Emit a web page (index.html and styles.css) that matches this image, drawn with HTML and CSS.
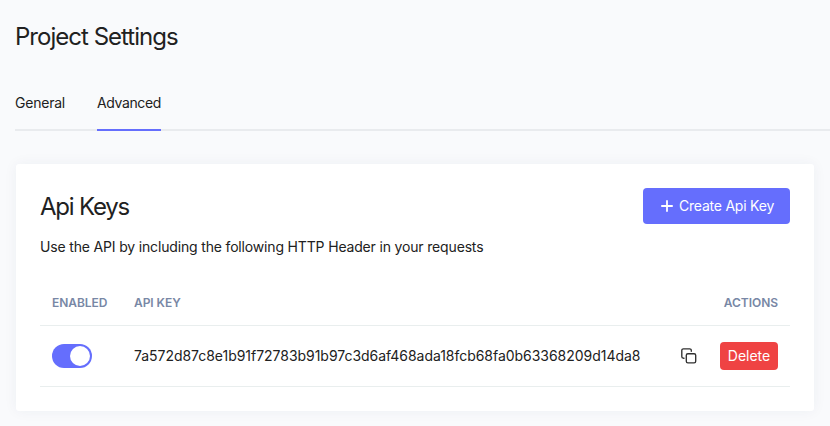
FILE: index.html
```html
<!DOCTYPE html>
<html lang="en">
<head>
<meta charset="utf-8">
<title>Project Settings</title>
<link rel="stylesheet" href="styles.css">
</head>
<body>
<main class="page">
  <h1 class="page-title">Project Settings</h1>
  <nav class="tabs">
    <a class="tab tab-general">General</a>
    <a class="tab tab-advanced active">Advanced</a>
  </nav>
  <section class="card">
    <header class="card-header">
      <h2 class="card-title">Api Keys</h2>
      <button class="create" type="button">
        <svg class="plus" viewBox="0 0 12 12"><path d="M6 .9v10.2M.9 6h10.2"/></svg>
        <span>Create Api Key</span>
      </button>
    </header>
    <p class="description">Use the API by including the following HTTP Header in your requests</p>
    <div class="table">
      <div class="row head">
        <span>Enabled</span>
        <span>Api Key</span>
        <span class="end">Actions</span>
      </div>
      <div class="row entry">
        <span class="toggle"><span class="knob"></span></span>
        <span class="key">7a572d87c8e1b91f72783b91b97c3d6af468ada18fcb68fa0b63368209d14da8</span>
        <span class="actions">
          <svg class="copy" viewBox="0 0 16 16"><rect x="5.3" y="5.7" width="9.4" height="9.2" rx="1.6"/><path d="M3 10.2H2.3A1.6 1.6 0 0 1 .8 8.6V2.4A1.6 1.6 0 0 1 2.4.8h6.3a1.6 1.6 0 0 1 1.6 1.6v.8"/></svg>
          <button class="delete" type="button">Delete</button>
        </span>
      </div>
    </div>
  </section>
</main>
</body>
</html>
```
FILE: styles.css
```css
* { box-sizing: border-box; }
body {
  margin: 0;
  height: 426px;
  overflow: hidden;
  background: #f9fafc;
  color: #212121;
  font-family: Inter, "Liberation Sans", sans-serif;
  font-size: 14px;
  line-height: 20px;
}
h1, h2, p { margin: 0; }
button { border: 0; padding: 0; font: inherit; color: #fff; }
.page { padding: 21px 0 0 15px; }
.page-title { font-size: 24px; line-height: 32px; font-weight: 400; letter-spacing: -0.98px; white-space: nowrap; }
.tabs { display: flex; gap: 32px; height: 38px; margin-top: 40px; border-bottom: 2px solid #e9ebee; }
.tab { height: 38px; border-bottom: 2px solid transparent; }
.tab-general { width: 50px; letter-spacing: -0.22px; }
.tab-advanced { width: 64px; letter-spacing: -0.38px; }
.tab.active { border-color: #656efd; }
.card {
  width: 798px;
  height: 247px;
  margin: 33px 0 0 1px;
  padding: 24px;
  background: #fff;
  border-radius: 3px;
  box-shadow: 0 0 14px rgba(40, 50, 90, 0.055);
}
.card-header { display: flex; justify-content: space-between; height: 36px; }
.card-title { font-size: 24px; line-height: 38px; font-weight: 400; letter-spacing: -1.2px; }
.create {
  display: flex;
  align-items: center;
  width: 147px;
  height: 36px;
  padding-left: 18px;
  gap: 6px;
  border-radius: 4px;
  background: #656efd;
  letter-spacing: -0.22px;
  white-space: nowrap;
}
.plus { width: 12px; height: 12px; fill: none; stroke: #fff; stroke-width: 1.8; stroke-linecap: round; }
.description { margin-top: 13px; letter-spacing: -0.165px; white-space: nowrap; }
.table { margin-top: 24px; }
.row {
  display: grid;
  grid-template-columns: 82px 1fr auto;
  align-items: center;
  padding: 0 12px;
  border-bottom: 1px solid #e9eeee;
}
.head { height: 45px; color: #7887a5; font-size: 12px; font-weight: 600; letter-spacing: -0.05px; text-transform: uppercase; }
.entry { height: 61px; }
.toggle { display: flex; justify-content: flex-end; width: 40px; height: 24px; padding: 2px; border-radius: 12px; background: #656efd; }
.knob { width: 20px; height: 20px; border-radius: 50%; background: #fff; }
.key { letter-spacing: -0.035px; white-space: nowrap; }
.actions { display: flex; align-items: center; gap: 23px; }
.copy { width: 16px; height: 16px; fill: none; stroke: #303030; stroke-width: 1.35; stroke-linecap: round; stroke-linejoin: round; }
.delete { width: 58px; height: 28px; border-radius: 4px; background: #ef4343; }
```
